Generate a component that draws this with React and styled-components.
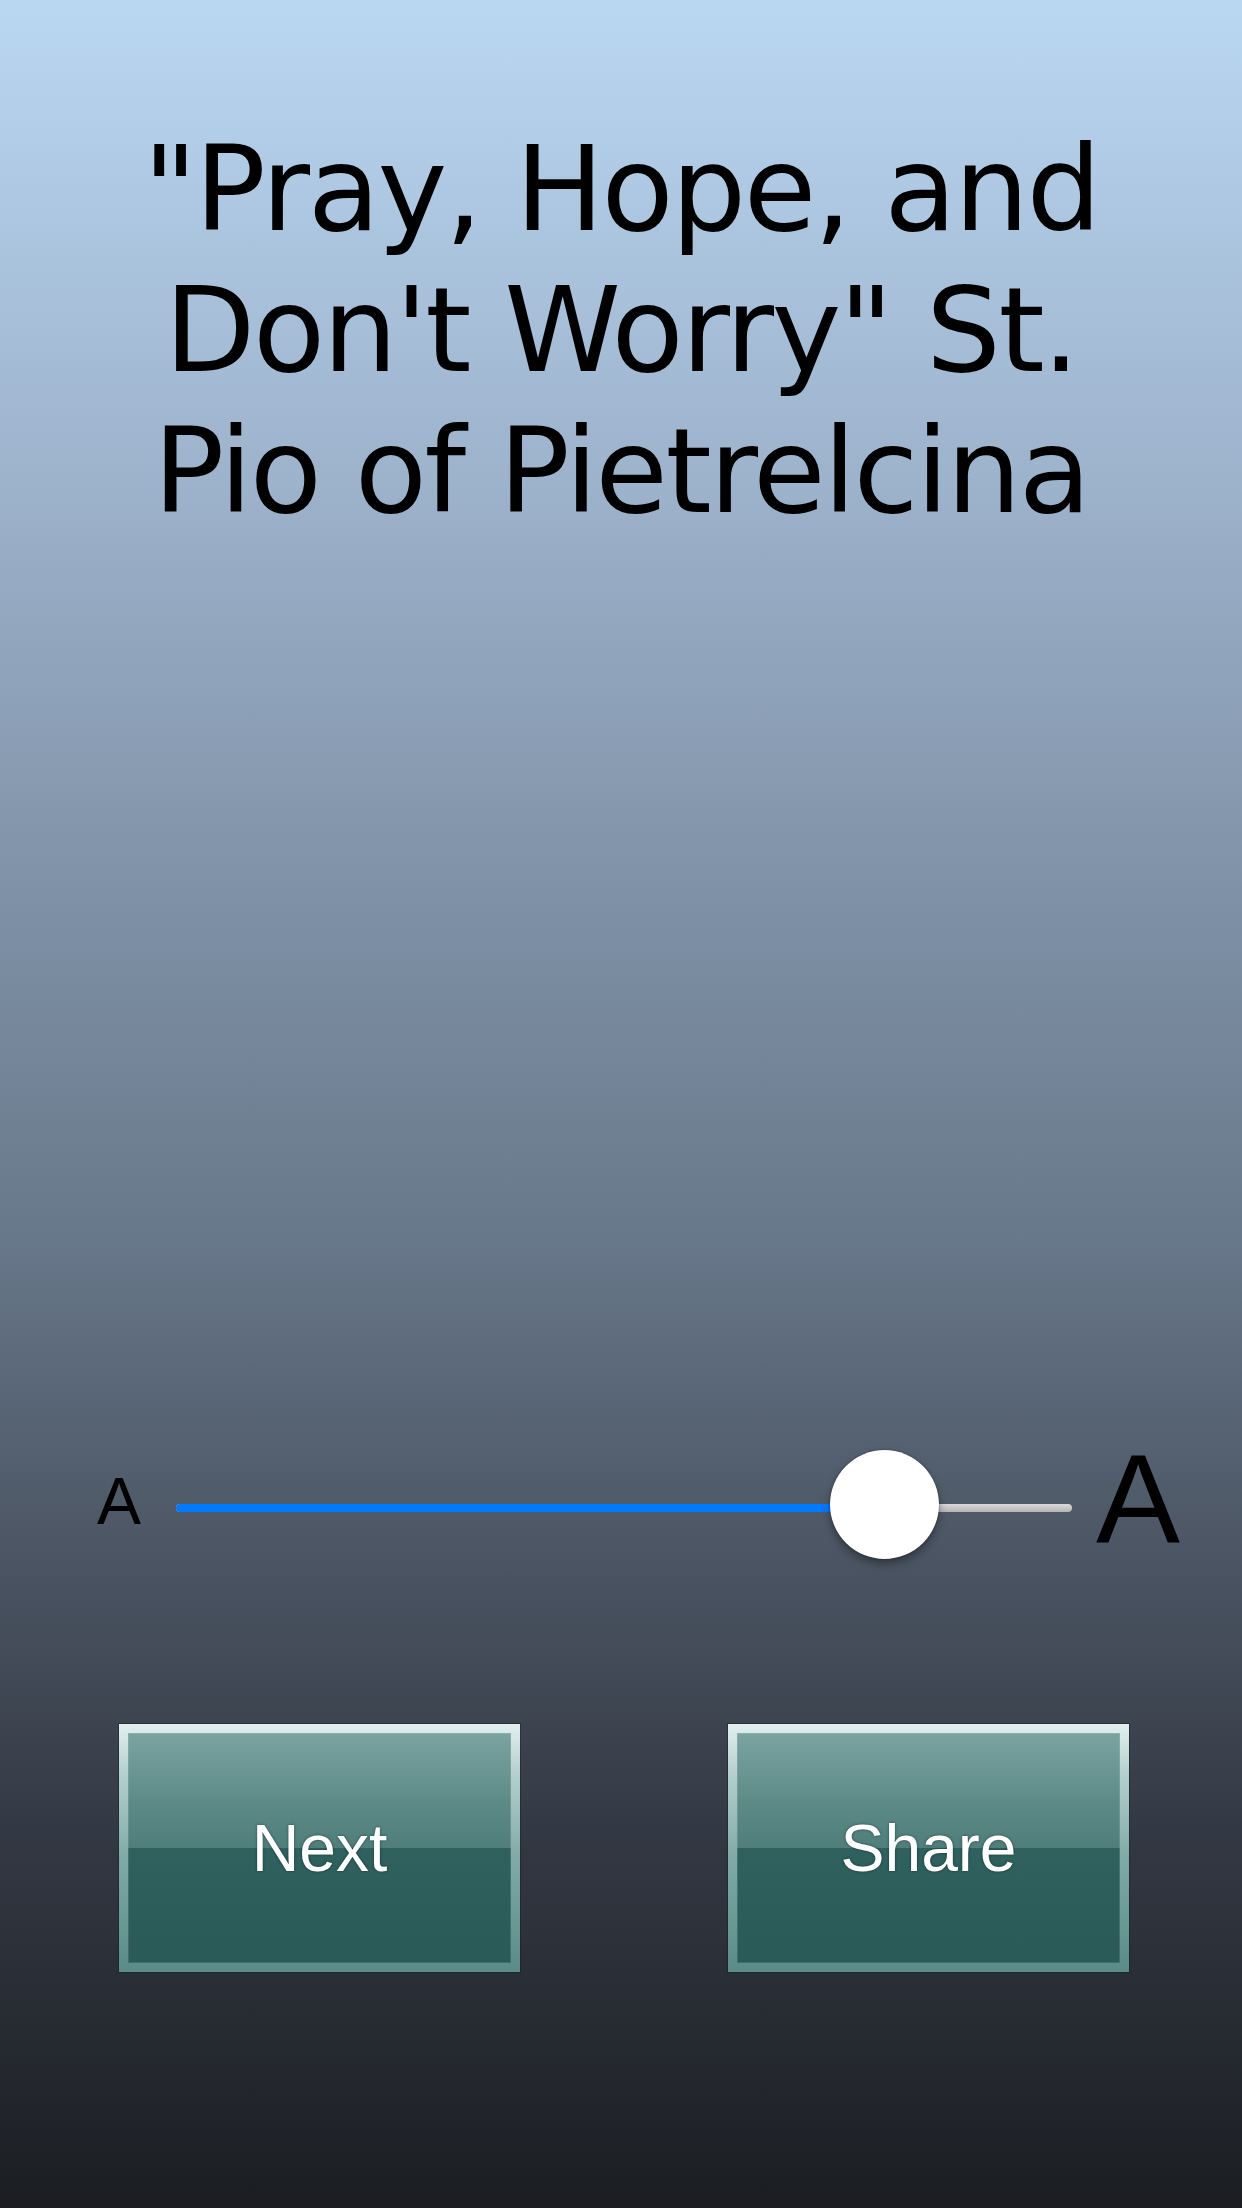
import React from 'react'
import styled, { createGlobalStyle } from 'styled-components'

const GlobalStyle = createGlobalStyle`
  html, body {
    margin: 0;
    padding: 0;
  }
  body {
    background: #1a1c1f;
  }
`

const Screen = styled.div`
  width: 1242px;
  height: 2208px;
  display: flex;
  flex-direction: column;
  background: linear-gradient(
    to bottom,
    #bad7f2 0%,
    #9db2cb 22%,
    #7f92a7 40%,
    #6a7a8d 55%,
    #4c5664 70%,
    #333944 83%,
    #1b1d21 100%
  );
  overflow: hidden;
`

const Quote = styled.h1`
  margin: 119px 0 0;
  font-family: "DejaVu Sans", Verdana, sans-serif;
  font-weight: normal;
  font-size: 118px;
  line-height: 141px;
  letter-spacing: -2.4px;
  color: #000;
  text-align: center;
`

const SizeRow = styled.div`
  margin-top: 904px;
  height: 120px;
  display: flex;
  align-items: center;
  padding-left: 97px;
`

const SizeLetter = styled.span`
  font-family: "Liberation Sans", Arial, sans-serif;
  font-size: ${p => (p.big ? 126 : 66)}px;
  line-height: 1;
  color: #000;
  margin-top: ${p => (p.big ? -14 : -10)}px;
`

const Slider = styled.div`
  position: relative;
  width: 896px;
  height: 120px;
  margin: 0 24px 0 35px;
  display: flex;
  align-items: center;
`

const Track = styled.div`
  width: 100%;
  height: 8px;
  margin-top: 3px;
  border-radius: 4px;
  background: linear-gradient(to bottom, #dadada, #b4b4b4);
  overflow: hidden;
`

const Fill = styled.div`
  height: 100%;
  background: #007aff;
`

const Thumb = styled.div`
  position: absolute;
  top: 4px;
  width: 109px;
  height: 109px;
  margin-left: -54px;
  border-radius: 50%;
  background: #fff;
  box-shadow: 0 5px 9px rgba(0, 0, 0, 0.35), 0 0 2px rgba(0, 0, 0, 0.45);
`

const ButtonRow = styled.div`
  margin-top: 158px;
  display: flex;
  justify-content: space-between;
  padding: 0 113px 0 119px;
`

const Button = styled.button`
  width: 401px;
  height: 248px;
  padding: 9px;
  border: none;
  border-radius: 0;
  cursor: pointer;
  background: linear-gradient(to bottom, #e2efef 0%, #b5d0ce 20%, #7ea9a6 55%, #5a8b88 100%);
  box-shadow: 0 0 0 1px rgba(20, 30, 35, 0.5);
`

const Face = styled.div`
  height: 100%;
  display: flex;
  align-items: center;
  justify-content: center;
  box-shadow: inset 0 0 0 1px rgba(255, 255, 255, 0.12);
  background: linear-gradient(
    to bottom,
    #7ba4a1 0%,
    #5d8a87 30%,
    #4f7e7b 50%,
    #2f615f 50%,
    #2b5a58 100%
  );
  font-family: "Liberation Sans", Arial, sans-serif;
  font-size: 66px;
  color: #fff;
  text-shadow: 0 0 3px rgba(0, 0, 0, 0.45);
`

function FontSlider({ value }) {
  const pct = value * 100
  return (
    <Slider>
      <Track>
        <Fill style={{ width: `${pct}%` }} />
      </Track>
      <Thumb style={{ left: `${pct}%` }} />
    </Slider>
  )
}

export default function App() {
  return (
    <Screen>
      <GlobalStyle />
      <Quote>
        "Pray, Hope, and<br />
        Don't Worry" St.<br />
        Pio of Pietrelcina
      </Quote>
      <SizeRow>
        <SizeLetter>A</SizeLetter>
        <FontSlider value={(883 - 175) / 896} />
        <SizeLetter big>A</SizeLetter>
      </SizeRow>
      <ButtonRow>
        <Button><Face>Next</Face></Button>
        <Button><Face>Share</Face></Button>
      </ButtonRow>
    </Screen>
  )
}
